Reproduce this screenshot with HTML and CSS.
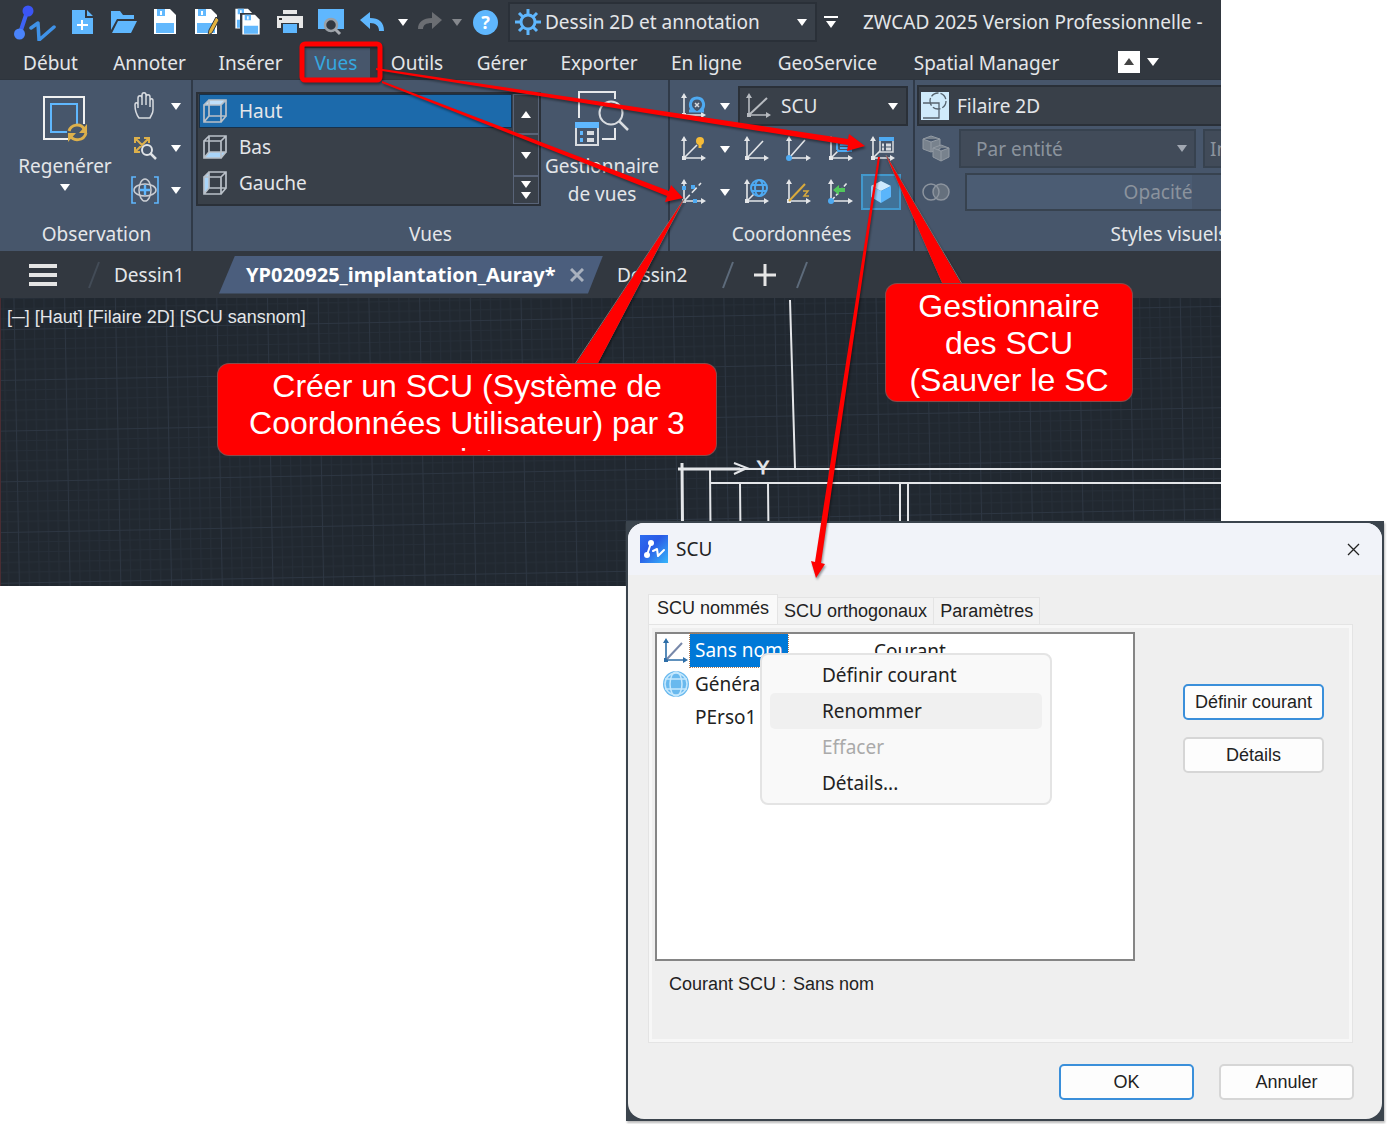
FILE: index.html
```html
<!DOCTYPE html>
<html lang="fr">
<head>
<meta charset="utf-8">
<title>ZWCAD 2025 - SCU</title>
<link rel="stylesheet" href="styles.css">
</head>
<body>
<svg class="sprite" aria-hidden="true">
  <symbol id="axes" viewBox="0 0 26 26"><g fill="none" stroke="currentColor" stroke-width="1.6"><path d="M4 4v18h18"/></g><path fill="currentColor" d="M4 0l3 5H1zM26 22l-5 3v-6zM2 20h4v4H2z"/></symbol>
  <symbol id="zw" viewBox="0 0 42 38"><g fill="none" stroke-linecap="round"><path d="M14 6L6 30" stroke="#3d62f5" stroke-width="4"/><path d="M17 25l7-5 1 17 15-13" stroke="#3f92e8" stroke-width="3.500" stroke-linejoin="round"/></g><circle cx="14" cy="8" r="5.5" fill="#3b55f5"/><circle cx="5.500" cy="31" r="5.5" fill="#4a84fb"/></symbol>
  <symbol id="floppy" viewBox="0 0 24 28"><path fill="#fff" d="M1 1h16l6 6v19H1z"/><path fill="#62b8fd" d="M4 1h8v7H4zM3 15h18v10H3z"/><path fill="#fff" d="M7 3h2v4H7z"/></symbol>
  <symbol id="cube" viewBox="0 0 26 26"><path fill="none" stroke="#b9c0c8" stroke-width="1.7" d="M2 7h17v17H2zM7 2h17v16H7zM2 7l5-5M19 7l5-5M2 24l5-6M19 24l5-6"/></symbol>
</svg>

<main class="desktop">
  <section class="app" aria-label="ZWCAD">
    <header class="titlebar">
      <svg class="logo" width="42" height="38"><use href="#zw"/></svg>
      <div class="quick">
        <button aria-label="Nouveau"><svg width="24" height="26" viewBox="0 0 24 26"><path fill="#5fb7fe" d="M1 1h13v8h8v16H1zM16 1l6 6h-6z"/><path stroke="#fff" stroke-width="2" d="M6 16h11M11 11v10"/></svg></button>
        <button aria-label="Ouvrir"><svg width="28" height="24" viewBox="0 0 28 24"><path fill="#5fb7fe" d="M1 1h9l3 4h11v4H7L1 20zM8 11h19l-6 12H2z"/></svg></button>
        <button aria-label="Enregistrer"><svg width="24" height="28"><use href="#floppy"/></svg></button>
        <button aria-label="Enregistrer sous"><svg width="26" height="28" viewBox="0 0 26 28"><svg width="24" height="28"><use href="#floppy"/></svg><path fill="#e3b23c" stroke="#343a42" d="M22 9l3 3-7 13-4 2 1-5z"/></svg></button>
        <button aria-label="Enregistrer tout"><svg width="28" height="28" viewBox="0 0 28 28"><svg width="20" height="22"><use href="#floppy"/></svg><path fill="#323840" d="M6 5h21v23H6z"/><svg x="7" y="6" width="20" height="22"><use href="#floppy"/></svg></svg></button>
        <button aria-label="Imprimer"><svg width="28" height="26" viewBox="0 0 28 26"><path fill="#e8e8e8" d="M7 1h14v4H7zM1 7h26v12h-4v-5H5v5H1z"/><path fill="#5fb7fe" d="M7 15h14v9H7z"/><path fill="#333" d="M3 9h3v2H3z"/></svg></button>
        <button aria-label="Aperçu"><svg width="28" height="28" viewBox="0 0 28 28"><path fill="#5fb7fe" d="M1 1h26v20H1z"/><circle cx="14" cy="17" r="6" fill="#323840" stroke="#9aa0a6" stroke-width="2.5"/><path stroke="#a7abb0" stroke-width="3" d="M18 21l5 5"/></svg></button>
        <button aria-label="Annuler"><svg width="26" height="22" viewBox="0 0 26 22"><path fill="#5fb7fe" d="M1 9l10-8v6c9 0 14 4 14 13h-5c0-5-3-8-9-8v6z"/></svg></button>
      </div>
      <button class="tiny" aria-label="Historique d'annulation"><i class="caret"></i></button>
      <button class="redo" aria-label="Rétablir"><svg width="26" height="22" viewBox="0 0 26 22"><path fill="#6b6e73" d="M25 9L15 1v6C6 7 1 11 1 18h5c0-4 3-6 9-6v6z"/></svg></button>
      <button class="tiny dim" aria-label="Historique de rétablissement"><i class="caret"></i></button>
      <button class="help" aria-label="Aide">?</button>
      <div class="picker workspace">
        <svg width="26" height="26" viewBox="0 0 26 26"><circle cx="13" cy="13" r="7" fill="none" stroke="#5fb7fe" stroke-width="3"/><path stroke="#5fb7fe" stroke-width="3" d="M13 0v5M13 21v5M0 13h5M21 13h5M4 4l4 4M18 18l4 4M22 4l-4 4M8 18l-4 4"/></svg>
        <select aria-label="Espace de travail"><option>Dessin 2D et annotation</option></select><i class="caret"></i>
      </div>
      <button class="custom" aria-label="Personnaliser"><i class="bar"></i><i class="caret"></i></button>
      <h1>ZWCAD 2025 Version Professionnelle -</h1>
    </header>

    <nav class="menu">
      <a href="#debut">Début</a><a href="#annoter">Annoter</a><a href="#inserer">Insérer</a><a href="#vues" class="on">Vues</a><a href="#outils">Outils</a><a href="#gerer">Gérer</a><a href="#exporter">Exporter</a><a href="#enligne">En ligne</a><a href="#geo">GeoService</a><a href="#spatial">Spatial Manager</a>
      <button class="fold" aria-label="Réduire le ruban"><i class="caret up"></i></button>
      <button class="tiny" aria-label="Options du ruban"><i class="caret big"></i></button>
    </nav>

    <div class="ribbon">
      <section class="panel observation">
        <div class="tools">
          <button class="large">
            <svg width="46" height="48" viewBox="0 0 46 48"><path fill="none" stroke="#f0f0f0" stroke-width="2" d="M26 43H2V1h40v27"/><path fill="none" stroke="#5fb7fe" stroke-width="2" d="M25 36H9V8h26v20"/><path fill="none" stroke="#ddb04b" stroke-width="3" d="M27 35c2-7 12-8 15-2M44 37c-2 8-13 9-16 2"/><path fill="#ddb04b" d="M45 28v9h-8zM26 46v-9h8z"/></svg>
            <span>Regenérer</span><i class="caret"></i>
          </button>
          <div class="column">
            <button aria-label="Panoramique"><svg width="28" height="28" viewBox="0 0 28 28"><path fill="none" stroke="#d8dbe0" stroke-width="1.5" d="M8 26c-3-4-4-7-4-13 0-3 3-3 3 0v3V6c0-3 4-3 4 0v7V3c0-3 4-3 4 0v10V5c0-3 4-3 4 0v10V9c0-3 3-3 3 0v9c0 4-2 5-3 8z"/></svg><i class="caret"></i></button>
            <button aria-label="Zoom"><svg width="28" height="28" viewBox="0 0 28 28"><g stroke="#ddb04b" stroke-width="2" fill="none"><path d="M5 5l12 12M17 5L5 17M4 9V4h5M13 4h5v5M4 13v5h5"/></g><circle cx="16" cy="16" r="5" fill="#47566b" stroke="#dfe2e6" stroke-width="2"/><path stroke="#dfe2e6" stroke-width="2.5" d="M19 19l6 6"/></svg><i class="caret"></i></button>
            <button aria-label="Orbite"><svg width="28" height="28" viewBox="0 0 28 28"><path fill="none" stroke="#5fb7fe" stroke-width="1.6" d="M5 1H1v26h4M23 1h4v26h-4"/><g fill="none" stroke="#c9cdd3" stroke-width="1.5"><ellipse cx="14" cy="14" rx="6" ry="11"/><ellipse cx="14" cy="14" rx="11" ry="6"/></g><path stroke="#5fb7fe" stroke-width="2.4" d="M14 9v10M9 14h10"/></svg><i class="caret"></i></button>
          </div>
        </div>
        <h2>Observation</h2>
      </section>

      <section class="panel vues">
        <div class="tools">
          <div class="gallery">
            <ul>
              <li class="sel"><svg width="26" height="26"><path fill="#bfe0fb" d="M2 7l5-5h17l-5 5z"/><use href="#cube"/></svg>Haut</li>
              <li><svg width="26" height="26"><path fill="#a9d5fa" d="M2 24l5-6h17l-5 6z"/><use href="#cube"/></svg>Bas</li>
              <li><svg width="26" height="26"><path fill="#a9d5fa" d="M2 7l5-5v16l-5 6z"/><use href="#cube"/></svg>Gauche</li>
            </ul>
            <div class="scroll">
              <button aria-label="Monter"><i class="caret up"></i></button>
              <button aria-label="Descendre"><i class="caret"></i></button>
              <button class="last" aria-label="Tout afficher"><i class="caret"></i><i class="caret"></i></button>
            </div>
          </div>
          <button class="large manager">
            <svg width="56" height="56" viewBox="0 0 56 56"><path fill="none" stroke="#e6e8eb" stroke-width="2" d="M5 27V1h36v7M41 37v11H28"/><circle cx="37" cy="22" r="11.500" fill="none" stroke="#d9dce0" stroke-width="2"/><path stroke="#d9dce0" stroke-width="2.500" d="M45 30l9 9"/><path fill="#5fb7fe" d="M1 31h24v6H1z"/><path fill="none" stroke="#d9dce0" stroke-width="2" d="M2 37v17h22V37"/><path stroke="#5fb7fe" stroke-width="4" d="M6 42h3M6 49h3"/><path stroke="#d9dce0" stroke-width="4" d="M13 42h7M13 49h7"/></svg>
            <span>Gestionnaire<br>de vues</span>
          </button>
        </div>
        <h2>Vues</h2>
      </section>

      <section class="panel coord">
        <div class="tools">
          <div class="row">
            <button aria-label="Rotation X"><svg width="26" height="26"><use href="#axes"/><path fill="none" stroke="#4eaaf2" stroke-width="3" d="M9 18h5c-6-4-4-13 3-13s9 9 3 13h4"/><path stroke="#d8dbe0" stroke-width="1.500" d="M15 10l4 4M19 10l-4 4"/></svg></button>
            <button class="drop" aria-label="Autres rotations"><i class="caret"></i></button>
            <div class="picker ucs"><svg width="26" height="26"><use href="#axes"/><path stroke="currentColor" stroke-width="2" d="M5 21L22 5"/></svg><select aria-label="Système de coordonnées"><option>SCU</option></select><i class="caret"></i></div>
          </div>
          <div class="row">
            <button aria-label="Origine"><svg width="26" height="26"><use href="#axes"/><path stroke="currentColor" stroke-width="1.600" d="M5 21L17 9"/><circle cx="20" cy="5" r="4" fill="#f5bb38"/><path stroke="#f5bb38" stroke-width="3" d="M20 8v4"/></svg></button>
            <button class="drop" aria-label="Autres origines"><i class="caret"></i></button>
            <button aria-label="SCU"><svg width="26" height="26"><use href="#axes"/><path stroke="currentColor" stroke-width="1.600" d="M5 21L20 5"/></svg></button>
            <button aria-label="SCU origine"><svg width="26" height="26"><use href="#axes"/><path stroke="currentColor" stroke-width="1.600" d="M5 21L20 4"/><circle cx="4" cy="22" r="3" fill="#4eaaf2"/></svg></button>
            <button aria-label="SCU objet"><svg width="26" height="26"><use href="#axes"/><path stroke="currentColor" stroke-width="1.600" d="M5 21l7-7"/><path fill="none" stroke="#4eaaf2" stroke-width="2" d="M10 14V6h14v9H10M13 9h9M13 12h9"/></svg></button>
            <button aria-label="Gestionnaire des SCU"><svg width="26" height="26"><use href="#axes"/><path stroke="currentColor" stroke-width="1.600" d="M5 21l7-7"/><path fill="#47566b" stroke="#d8dbe0" stroke-width="1.500" d="M11 2h13v14H11z"/><path fill="#4eaaf2" d="M10 1h15v4H10z"/><path stroke="#d8dbe0" stroke-width="3" d="M13 9h2M17 9h5M13 13h2M17 13h5"/></svg></button>
          </div>
          <div class="row">
            <button aria-label="SCU 3 points"><svg width="26" height="26"><use href="#axes"/><path stroke="currentColor" stroke-width="1.600" stroke-dasharray="7 3" d="M5 21L21 4"/><path stroke="#4eaaf2" stroke-width="4" d="M2 9h4M11 8h4M13 22h4"/></svg></button>
            <button class="drop" aria-label="Autres SCU"><i class="caret"></i></button>
            <button aria-label="SCU général"><svg width="26" height="26"><use href="#axes"/><path stroke="currentColor" stroke-width="1.600" d="M5 21l6-6"/><g fill="#47566b" stroke="#4eaaf2" stroke-width="2"><circle cx="16" cy="9" r="8"/><ellipse cx="16" cy="9" rx="4" ry="8"/><path d="M9 6h14M9 12h14"/></g></svg></button>
            <button aria-label="Vecteur Z"><svg width="26" height="26"><use href="#axes"/><path stroke="#d9aa3c" stroke-width="2" fill="none" d="M4 22L20 5"/><path stroke="#d9aa3c" stroke-width="1.500" fill="none" d="M18 12h5l-4 5h5"/></svg></button>
            <button aria-label="SCU précédent"><svg width="26" height="26"><use href="#axes"/><path stroke="currentColor" stroke-width="1.600" stroke-dasharray="4 2" d="M5 21L20 4"/><path fill="#51c65b" d="M6 11l6-5v3h6v4h-6v3z"/><circle cx="4" cy="22" r="3" fill="#4eaaf2"/></svg></button>
            <button class="active" aria-label="SCU dynamique"><svg width="24" height="26" viewBox="0 0 24 26"><path fill="#cdeafd" d="M12 2l10 5-10 5L2 7z"/><path fill="#8dcdfb" d="M2 7l10 5v12L2 18z"/><path fill="#5ab5fb" d="M22 7l-10 5v12l10-6z"/></svg></button>
          </div>
        </div>
        <h2>Coordonnées</h2>
      </section>

      <section class="panel styles">
        <div class="tools">
          <div class="picker visual"><svg width="28" height="28" viewBox="0 0 28 28"><path fill="#d0ebfb" d="M0 0h28v28H0z"/><g fill="none" stroke="#55636e" stroke-width="1.300"><path d="M2 11h16v15H2"/><circle cx="17" cy="9" r="8" stroke-dasharray="8 2"/></g></svg><select aria-label="Style visuel"><option>Filaire 2D</option></select></div>
          <div class="row off">
            <svg width="28" height="28" viewBox="0 0 28 28"><g fill="#78828d" stroke="#929aa3"><path d="M1 4l8-3 9 3v10l-9 3-8-3zM1 4l8 3 9-3M9 7v10"/><path d="M11 13l8-3 8 3v9l-8 4-8-4zM11 13l8 3 8-3M19 16v10"/></g></svg>
            <div class="picker entity"><select aria-label="Couleur" disabled><option>Par entité</option></select><i class="caret"></i></div>
            <div class="picker other"><select aria-label="Arêtes" disabled><option>Inactif</option></select></div>
          </div>
          <div class="row off">
            <svg width="28" height="20" viewBox="0 0 28 20"><g fill="#65707d" stroke="#8c949e" stroke-width="1.500"><circle cx="19" cy="10" r="8"/><circle cx="9" cy="10" r="8" fill="none"/></g></svg>
            <button class="opacity" disabled>Opacité</button>
          </div>
        </div>
        <h2>Styles visuels</h2>
      </section>
    </div>

    <nav class="docs">
      <button class="burger" aria-label="Menu"><i></i><i></i><i></i></button>
      <svg class="slash faint" width="12" height="28"><path d="M1 27L11 1"/></svg>
      <a href="#dessin1" class="first">Dessin1</a>
      <a href="#auray" class="current">YP020925_implantation_Auray* <svg width="14" height="14"><path stroke="#a9b1be" stroke-width="3" d="M1 1l12 12M13 1L1 13"/></svg></a>
      <a href="#dessin2" class="second">Dessin2</a>
      <svg class="slash" width="12" height="28"><path d="M1 27L11 1"/></svg>
      <button class="plus" aria-label="Nouveau dessin"><svg width="22" height="22"><path stroke="#e6e6e6" stroke-width="3" d="M0 11h22M11 0v22"/></svg></button>
      <svg class="slash" width="12" height="28"><path d="M1 27L11 1"/></svg>
    </nav>

    <div class="drawing">
      <svg width="1900" height="288" aria-hidden="true">
        <defs><pattern id="grid" width="50.700" height="50.700" patternUnits="userSpaceOnUse" patternTransform="translate(14 31) rotate(-1.100)"><path fill="none" stroke="#262e38" d="M10.500 0v51M20.500 0v51M30.500 0v51M40.500 0v51M0 10.500h51M0 20.500h51M0 30.500h51M0 40.500h51"/><path fill="none" stroke="#2d3642" d="M.5 0v51M0 .5h51"/></pattern></defs>
        <rect width="1900" height="288" fill="url(#grid)"/>
        <path stroke="#4a2d33" d="M.5 0v288"/>
        <g fill="none" stroke="#e4e6e9" stroke-width="2"><path d="M790 2l5 168M711 185h1189M710 171l1 120M740 185l1 106M768 185l1 106M900 185v106M908 185v106M683 171h1217"/><path stroke-width="3" d="M678 171h62M682 165l1 126"/><path d="M734 165l13 5-13 6"/></g>
        <text x="757" y="176">Y</text>
      </svg>
      <p>[─] [Haut] [Filaire 2D] [SCU sansnom]</p>
    </div>
  </section>

  <section class="dialog" role="dialog" aria-labelledby="dlg-title">
    <div class="window">
      <header>
        <svg width="28" height="28" viewBox="0 0 28 28"><defs><linearGradient id="blue" x2="1" y2="1"><stop stop-color="#2b6cf0"/><stop offset=".4" stop-color="#2a5ae6"/><stop offset="1" stop-color="#37b6fb"/></linearGradient></defs><path fill="url(#blue)" d="M0 0h28v28H0z"/><path fill="none" stroke="#fff" stroke-width="2" stroke-linecap="round" stroke-linejoin="round" d="M11 8L7 20M13 16l4-2 1 7 6-6"/><circle cx="11" cy="8" r="3" fill="#fff"/><circle cx="7" cy="20" r="3" fill="#fff"/></svg>
        <h2 id="dlg-title">SCU</h2>
        <button aria-label="Fermer"><svg width="13" height="13"><path stroke="#222" stroke-width="1.300" d="M1 1l11 11M12 1L1 12"/></svg></button>
      </header>
      <div class="tabs"><button class="on">SCU nommés</button><button>SCU orthogonaux</button><button>Paramètres</button></div>
      <div class="sheet">
        <div class="list">
          <table>
            <tr><td class="ico"><svg class="ax" width="26" height="26"><use href="#axes"/><path stroke="#78a" stroke-width="2" d="M5 21L20 5"/></svg></td><td><span class="picked">Sans nom</span></td><td>Courant</td></tr>
            <tr><td class="ico"><svg width="28" height="28"><circle cx="14" cy="14" r="13" fill="#69b9ee"/><g fill="none" stroke="#c5e8fd" stroke-width="1.500"><circle cx="14" cy="14" r="11"/><ellipse cx="14" cy="14" rx="6" ry="12"/><path d="M3 9h22M3 19h22"/></g></svg></td><td>Général</td><td></td></tr>
            <tr><td class="ico"></td><td>PErso1</td><td></td></tr>
          </table>
          <div class="context" role="menu">
            <button role="menuitem">Définir courant</button><button role="menuitem" class="hover">Renommer</button><button role="menuitem" disabled>Effacer</button><button role="menuitem">Détails...</button>
          </div>
        </div>
        <div class="side"><button class="btn primary">Définir courant</button><button class="btn">Détails</button></div>
        <p class="status"><span>Courant SCU :</span><span>Sans nom</span></p>
      </div>
      <footer><button class="btn primary">OK</button><button class="btn">Annuler</button></footer>
    </div>
  </section>

  <svg class="marks" width="1200" height="600" aria-hidden="true">
    <g fill="none" stroke="#777" stroke-width="1"><path d="M575 364L684 199 597 364M943 284L886 155 962 284"/></g>
    <g fill="red">
      <path d="M575 365L684 199 597 365zM943 285L886 155 962 285z"/>
      <path d="M376 68l472 71 1-5 16 12-18 5 1-6-472-75zM382 81l287 110 2-6 12 13-18 4 2-6-285-113z"/>
      <path d="M878 157h2l-59 406 4 1-9 14-5-17 4 1z"/>
    </g>
    <rect x="302" y="44" width="78" height="36" rx="3" fill="none" stroke="red" stroke-width="5"/>
  </svg>
  <aside class="callout points"><p>Créer un SCU (Système de<br>Coordonnées Utilisateur) par 3<br>points</p></aside>
  <aside class="callout ucsman"><p>Gestionnaire<br>des SCU<br>(Sauver le SC</p></aside>
</main>
</body>
</html>
```
FILE: styles.css
```css
* { box-sizing: border-box; }
body { margin: 0; background: #fff; font-family: "Noto Sans", "Open Sans", sans-serif; font-size: 19px; color: #e4e6e9; }
button, select { font: inherit; color: inherit; background: none; border: 0; padding: 0; margin: 0; }
h1, h2, p, ul { margin: 0; padding: 0; font-weight: 400; font-size: inherit; list-style: none; }
a { color: inherit; text-decoration: none; }
svg { display: block; flex: none; }
.sprite { width: 0; height: 0; position: absolute; }

/* The application and the dialog share one grid cell, so they overlap like desktop windows */
.desktop { position: relative; display: grid; grid-template-columns: minmax(0, 1fr); }
.desktop > section { grid-area: 1 / 1; align-self: start; }
.app { margin-right: 166px; background: #323840; overflow: hidden; white-space: nowrap; }

.caret { display: block; flex: none; width: 0; height: 0; border: 5px solid transparent; border-top: 7px solid #fff; border-bottom: 0; }
.caret.up { border-top: 0; border-bottom: 7px solid #fff; }
.caret.big { border-width: 8px 6px 0; }
.dim .caret { border-top-color: #85888d; }

.titlebar { display: flex; align-items: center; height: 44px; padding-left: 14px; }
.logo { margin-right: 6px; }
.quick { display: grid; grid-template-columns: repeat(8, 1fr); width: 331px; flex: none; }
.quick button, .tiny, .redo { display: flex; align-items: center; justify-content: center; }
.tiny { width: 20px; height: 20px; flex: none; }
.redo { width: 34px; flex: none; }
.help { width: 25px; height: 25px; margin: 0 10px 0 6px; flex: none; border-radius: 50%; background: #5fb7fe; font-size: 18px; font-weight: 700; line-height: 25px; color: #fff; }
.picker { display: flex; align-items: center; flex: none; background: #394049; border: 2px solid #2a3038; }
.picker select { appearance: none; flex: 1; min-width: 0; height: 100%; opacity: 1; }
.workspace { width: 309px; height: 40px; padding: 0 8px 0 5px; gap: 4px; }
.custom { display: flex; flex-direction: column; align-items: center; gap: 3px; width: 28px; flex: none; }
.custom .bar { width: 14px; height: 2px; background: #fff; }
.titlebar h1 { margin-left: 18px; }

.menu { display: grid; grid-template-columns: 91px 107px 95px 76px 86px 84px 110px 105px 137px 181px 63px 26px; align-items: center; height: 35px; padding-left: 5px; }
.menu a { height: 31px; line-height: 31px; text-align: center; align-self: end; }
.menu .on { background: #47566b; color: #35a8e0; margin: 0 4px; }
.fold { justify-self: end; display: flex; align-items: center; justify-content: center; width: 22px; height: 22px; background: #fff; }
.fold .caret.up { border-bottom-color: #444; }
.menu .tiny { justify-self: center; }

.ribbon { display: flex; height: 172px; padding-left: 2px; background: #47566b; border-top: 1px solid #2d343d; overflow: hidden; }
.panel { display: flex; flex-direction: column; flex: none; border-right: 2px solid #303a48; }
.panel h2 { text-align: center; line-height: 32px; }
.tools { height: 138px; }
.observation { width: 191px; }
.observation .tools, .vues .tools { display: flex; }
.large { display: flex; flex-direction: column; align-items: center; line-height: 28px; }
.observation .large { width: 126px; padding-top: 16px; }
.observation .large span { margin: 8px 0 4px; }
.column { display: flex; flex-direction: column; gap: 14px; padding: 12px 0 0 3px; }
.column button { display: flex; align-items: center; gap: 12px; }
.vues { width: 477px; }
.gallery { display: flex; width: 345px; height: 114px; margin: 12px 0 0 3px; background: #394049; border: 2px solid #2a3038; }
.gallery ul { flex: 1; padding: 1px 0; }
.gallery li { display: flex; align-items: center; gap: 11px; height: 32px; margin: 0 2px 4px; padding-left: 2px; }
.gallery .sel { background: #1c6aab; box-shadow: 0 0 0 1px #17314b; }
.scroll { display: grid; grid-template-rows: 38px 42px 1fr; width: 26px; border: 1px solid #596478; }
.scroll button { display: flex; flex-direction: column; align-items: center; justify-content: center; gap: 4px; }
.scroll button + button { border-top: 2px solid #596478; }
.manager { width: 122px; padding-top: 11px; }
.manager span { margin-top: 5px; }
.coord { width: 245px; }
.coord .tools { display: flex; flex-direction: column; padding: 5px 4px 0 2px; gap: 1px; }
.row { display: flex; align-items: center; height: 42px; }
.coord .row button { display: flex; align-items: center; justify-content: center; width: 42px; height: 36px; }
.coord .row .drop { width: 21px; }
.coord .row .active { width: 40px; background: #407298; border: 2px solid #4298cc; }
.ucs { width: 170px; height: 40px; margin-left: 3px; padding: 0 8px 0 5px; gap: 10px; color: #b7bbc0; }
.ucs select { color: #e4e6e9; }
.styles { width: 508px; border: 0; }
.styles .tools { display: flex; flex-direction: column; gap: 2px; padding: 5px 0 0 2px; }
.visual { height: 41px; padding-left: 2px; gap: 8px; }
.styles .row { height: 41px; padding-left: 5px; color: #8b939d; }
.off .picker { background: #414b59; border-color: #37424f; height: 39px; }
.off select { color: #8b939d; }
.off .caret { border-top-color: #a1a8b2; }
.entity { width: 237px; margin: 0 7px 0 9px; padding: 0 7px 0 15px; }
.other { width: 150px; padding-left: 5px; }
.opacity { width: 386px; height: 38px; margin-left: 15px; border: 2px solid #37424f; background: linear-gradient(90deg, #4b5c73 225px, #47566b 225px); }

.docs { display: flex; align-items: center; height: 47px; background: #323840; }
.burger { display: flex; flex-direction: column; gap: 5px; width: 28px; margin: 0 31px 0 29px; flex: none; }
.burger i { height: 4px; background: #e4e4e4; }
.slash path { stroke: #5d6b7b; stroke-width: 2; }
.slash.faint path { stroke: #434c57; }
.first { width: 102px; padding-left: 14px; }
.current { display: flex; align-items: center; gap: 14px; width: 384px; height: 38px; margin: 0 14px 0 17px; padding-left: 27px; flex: none; background: #4b5e7d; color: #fff; font-weight: 700; font-size: 20px; clip-path: polygon(16px 0, 100% 0, calc(100% - 15px) 100%, 0 100%); }
.second { width: 105px; }
.plus { margin: 0 20px; }

.drawing { display: grid; height: 288px; background: #212830; overflow: hidden; }
.drawing > * { grid-area: 1 / 1; }
.drawing p { padding: 8px 7px; font: 18px/22px "Liberation Sans", sans-serif; }
.drawing text { font: 18px "Liberation Sans", sans-serif; fill: #e4e6e9; stroke: #e4e6e9; }

.dialog { margin: 521px 3px 3px 626px; background: #3b444d; box-shadow: 1px 2px 2px #bbb; padding: 2px; color: #222; }
.window { background: #efefef; border-radius: 16px; overflow: hidden; font: 18px/22px "Liberation Sans", sans-serif; }
.window header { display: flex; align-items: center; gap: 8px; height: 52px; padding: 0 22px 0 12px; background: #f1f3f9; font: 19px "Noto Sans", sans-serif; }
.window header button { margin-left: auto; }
.tabs { display: flex; align-items: flex-end; height: 49px; padding-left: 20px; }
.tabs button { height: 27px; padding: 0 6px; background: #f2f2f2; border: 1px solid #e4e4e4; border-bottom: 0; border-left-width: 0; }
.tabs .on { height: 30px; padding: 0 8px 4px; background: #f9f9f9; border-left-width: 1px; }
.sheet { display: grid; grid-template-columns: 480px 1fr; margin: 0 29px 0 20px; height: 419px; padding: 7px 0 0 6px; align-content: start; border: 1px solid #e4e4e4; box-shadow: inset 0 0 0 3px #f7f7f7; }
.list { position: relative; height: 329px; background: #fff; border: 2px solid #858585; font: 19px "Noto Sans", sans-serif; }
table { border-collapse: collapse; }
td { height: 33px; padding: 0; vertical-align: middle; }
td:nth-child(2) { width: 184px; padding-left: 5px; }
.ico { width: 33px; padding-left: 5px; }
.ax { color: #2d6ea8; }
.picked { display: block; width: 98px; height: 33px; margin-left: -5px; padding-left: 5px; line-height: 33px; background: #0078d7; color: #fff; outline: 1px dotted #b07a50; }
.context { position: absolute; left: 103px; top: 19px; width: 292px; padding: 2px 8px; background: #f9f9f9; border: 2px solid #e4e4e4; border-radius: 8px; }
.context button { display: block; width: 100%; height: 36px; padding-left: 52px; text-align: left; border-radius: 5px; }
.context .hover { background: #f0f0f0; }
.context :disabled { color: #aaa; }
.side { display: flex; flex-direction: column; gap: 17px; padding: 52px 0 0 48px; }
.btn { width: 135px; height: 36px; background: #fdfdfd; border: 2px solid #d6d6d6; border-radius: 5px; white-space: nowrap; }
.side .btn { width: 141px; }
.btn.primary { border-color: #3a8fda; }
.status { display: flex; gap: 7px; padding: 12px 0 0 14px; }
.window footer { display: flex; justify-content: flex-end; gap: 25px; padding: 21px 28px 19px 0; }

.marks { position: absolute; left: 0; top: 0; pointer-events: none; filter: drop-shadow(1px 2px 1px #0006); }
.callout { position: absolute; padding: 4px 0; background: red; border-radius: 11px; box-shadow: 0 0 0 1px #8a4a4a; color: #fff; text-align: center; white-space: nowrap; font: 32px/37px "Liberation Sans", sans-serif; }
.points { left: 218px; top: 364px; width: 498px; height: 91px; }
.points p { height: 83px; overflow: hidden; }
.ucsman { left: 886px; top: 284px; width: 246px; height: 117px; }
```
